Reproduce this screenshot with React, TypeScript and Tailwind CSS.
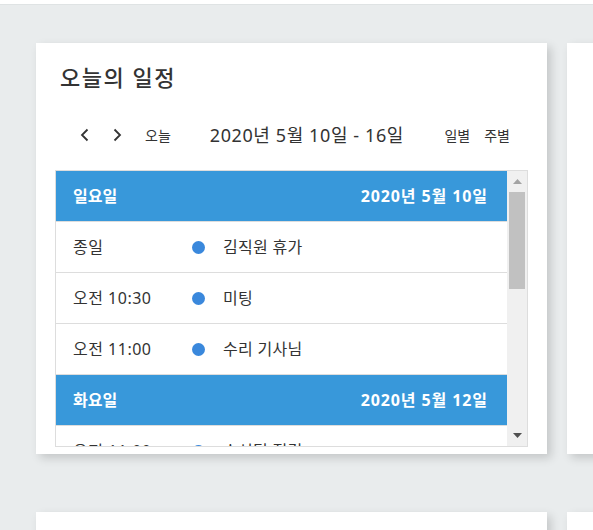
import type { ReactNode } from 'react'

type Item = { time: string; title: string }
type Day = { weekday: string; date: string; items: Item[] }

const days: Day[] = [
  {
    weekday: '일요일',
    date: '2020년 5월 10일',
    items: [
      { time: '종일', title: '김직원 휴가' },
      { time: '오전 10:30', title: '미팅' },
      { time: '오전 11:00', title: '수리 기사님' },
    ],
  },
  {
    weekday: '화요일',
    date: '2020년 5월 12일',
    items: [{ time: '오전 11:00', title: '수석팀 점검' }],
  },
]

const font = { fontFamily: '"Noto Sans", "Noto Sans CJK KR", sans-serif' }

function Chevron({ dir }: { dir: 'left' | 'right' }) {
  return (
    <svg width="9" height="14" viewBox="0 0 9 14" fill="none">
      <polyline
        points={dir === 'left' ? '7.5,1.5 2,7 7.5,12.5' : '1.5,1.5 7,7 1.5,12.5'}
        stroke="#333"
        strokeWidth="1.8"
      />
    </svg>
  )
}

function Card({ children }: { children?: ReactNode }) {
  return <div className="h-[411px] bg-white shadow-[4px_4px_9px_rgba(0,0,0,0.16)]">{children}</div>
}

function Scrollbar() {
  return (
    <div className="flex w-[20px] shrink-0 flex-col bg-[#f0f0f0]">
      <div className="flex h-[20px] items-center justify-center">
        <svg width="9" height="5" viewBox="0 0 9 5">
          <polygon points="0,5 4.5,0 9,5" fill="#a3a3a3" />
        </svg>
      </div>
      <div className="mx-[2px] mt-px h-[97px] bg-[#c1c1c1]" />
      <div className="flex-1" />
      <div className="flex h-[22px] items-center justify-center">
        <svg width="9" height="5" viewBox="0 0 9 5">
          <polygon points="0,0 9,0 4.5,5" fill="#505050" />
        </svg>
      </div>
    </div>
  )
}

function Schedule() {
  return (
    <div className="flex h-full flex-col px-[19px] text-[#333]" style={font}>
      <h2 className="pl-[5px] pt-[18px] text-[22px] font-medium leading-[33px] tracking-[1.5px] text-[#333]">오늘의 일정</h2>

      <div className="mt-[26px] flex h-[30px] items-center">
        <button className="ml-[25px] flex items-center">
          <Chevron dir="left" />
        </button>
        <button className="ml-[24px] flex items-center">
          <Chevron dir="right" />
        </button>
        <button className="ml-[23px] text-[14px]">오늘</button>
        <div className="ml-[39px] text-[18px] tracking-[0.6px]">2020년 5월 10일 - 16일</div>
        <div className="ml-auto mr-[18px] flex gap-[14px] text-[14px]">
          <button>일별</button>
          <button>주별</button>
        </div>
      </div>

      <div className="mt-[20px] flex h-[277px] border border-[#dddddd]">
        <div className="flex-1 overflow-hidden">
          {days.map((day) => (
            <div key={day.date}>
              <div className="flex h-[51px] items-center justify-between border-b border-[#dddddd] bg-[#3898da] pl-[17px] pr-[19px] text-[16px] font-bold text-white">
                <span>{day.weekday}</span>
                <span className="tracking-[0.9px]">{day.date}</span>
              </div>
              {day.items.map((item) => (
                <div key={item.time + item.title} className="flex h-[51px] items-center border-b border-[#dddddd] pl-[17px] text-[16px]">
                  <span className="w-[119px] tracking-[0.5px]">{item.time}</span>
                  <span className="h-[13px] w-[13px] rounded-full bg-[#3a88dc]" />
                  <span className="ml-[18px] tracking-[0.3px]">{item.title}</span>
                </div>
              ))}
            </div>
          ))}
        </div>
        <Scrollbar />
      </div>
    </div>
  )
}

export default function App() {
  return (
    <div className="h-[530px] w-full overflow-hidden bg-[#e9eced]">
      <div className="h-[5px] border-b border-[#dfe3e4] bg-white" />
      <div className="grid grid-cols-[511px_511px] gap-x-[20px] gap-y-[58px] pl-[36px] pt-[38px]">
        <Card>
          <Schedule />
        </Card>
        <Card />
        <Card />
        <Card />
      </div>
    </div>
  )
}
